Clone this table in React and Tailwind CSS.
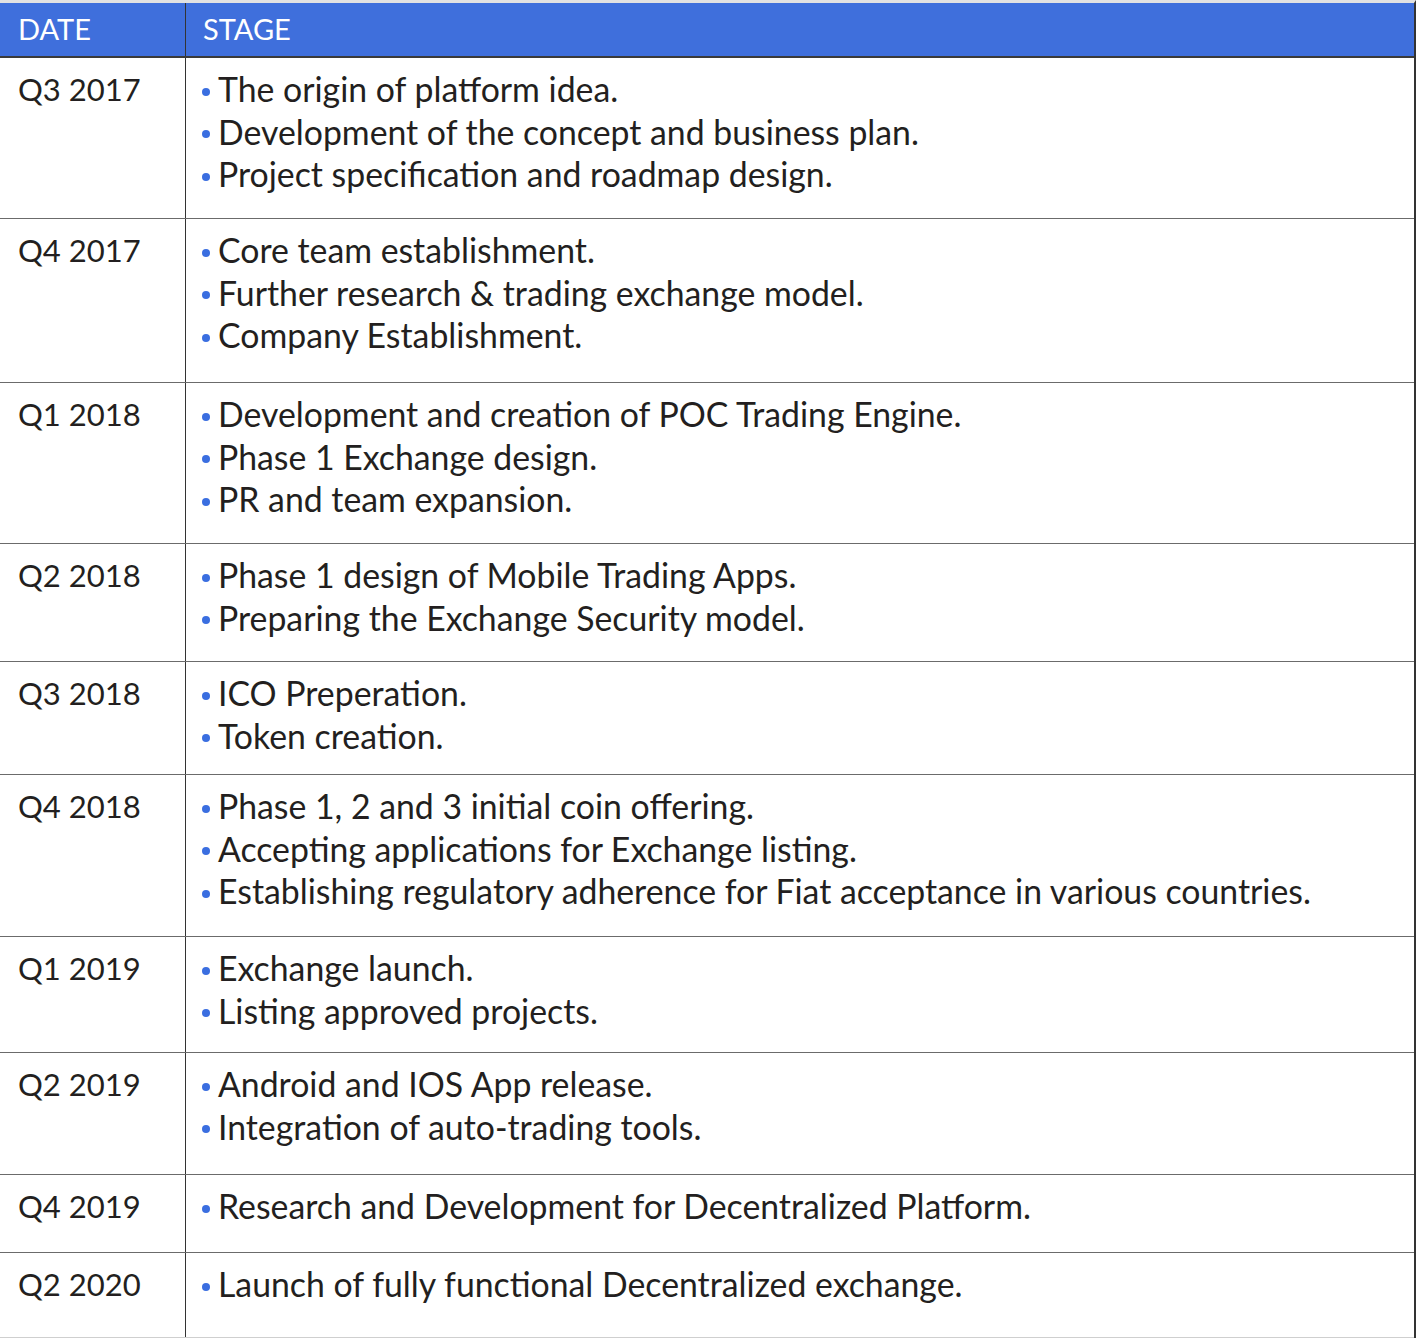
import React from 'react';

const rows = [
  {
    date: 'Q3 2017',
    h: 'h-[161px]',
    items: [
      'The origin of platform idea.',
      'Development of the concept and business plan.',
      'Project specification and roadmap design.',
    ],
  },
  {
    date: 'Q4 2017',
    h: 'h-[164px]',
    items: [
      'Core team establishment.',
      'Further research & trading exchange model.',
      'Company Establishment.',
    ],
  },
  {
    date: 'Q1 2018',
    h: 'h-[161px]',
    items: [
      'Development and creation of POC Trading Engine.',
      'Phase 1 Exchange design.',
      'PR and team expansion.',
    ],
  },
  {
    date: 'Q2 2018',
    h: 'h-[118px]',
    items: ['Phase 1 design of Mobile Trading Apps.', 'Preparing the Exchange Security model.'],
  },
  {
    date: 'Q3 2018',
    h: 'h-[113px]',
    items: ['ICO Preperation.', 'Token creation.'],
  },
  {
    date: 'Q4 2018',
    h: 'h-[162px]',
    items: [
      'Phase 1, 2 and 3 initial coin offering.',
      'Accepting applications for Exchange listing.',
      'Establishing regulatory adherence for Fiat acceptance in various countries.',
    ],
  },
  {
    date: 'Q1 2019',
    h: 'h-[116px]',
    items: ['Exchange launch.', 'Listing approved projects.'],
  },
  {
    date: 'Q2 2019',
    h: 'h-[122px]',
    items: ['Android and IOS App release.', 'Integration of auto-trading tools.'],
  },
  {
    date: 'Q4 2019',
    h: 'h-[78px]',
    items: ['Research and Development for Decentralized Platform.'],
  },
  {
    date: 'Q2 2020',
    h: 'h-[85px]',
    items: ['Launch of fully functional Decentralized exchange.'],
  },
];

function Row({ row, last }) {
  return (
    <div
      className={`flex ${row.h} border-b ${last ? 'border-[#cfcfcf]' : 'border-[#6b6b6b]'}`}
    >
      <div className="w-[186px] shrink-0 border-r border-[#333] pl-[18px] pt-[10px] text-[31px]">
        {row.date}
      </div>
      <ul className="flex-1 pl-[16px] pt-[10px] text-[33.8px]">
        {row.items.map((item) => (
          <li key={item} className="flex items-center">
            <span className="mr-[8px] mt-[5px] h-[8px] w-[8px] shrink-0 rounded-full bg-[#3a6ee0]" />
            <span>{item}</span>
          </li>
        ))}
      </ul>
    </div>
  );
}

export default function App() {
  return (
    <div className="w-[1416px] bg-white font-['Lato',sans-serif] leading-[42.5px] text-[#231f20]">
      <div className="border-r-2 border-t-[3px] border-r-[#333] border-t-[#e2e2e2]">
        <div className="flex h-[55px] items-center border-b-2 border-[#3a3a3a] bg-[#3f6fdc] text-[29px] text-white">
          <div className="flex h-full w-[186px] shrink-0 items-center border-r border-[#333] pl-[18px]">
            DATE
          </div>
          <div className="pl-[17px]">STAGE</div>
        </div>
        {rows.map((row, i) => (
          <Row key={row.date} row={row} last={i === rows.length - 1} />
        ))}
      </div>
    </div>
  );
}
